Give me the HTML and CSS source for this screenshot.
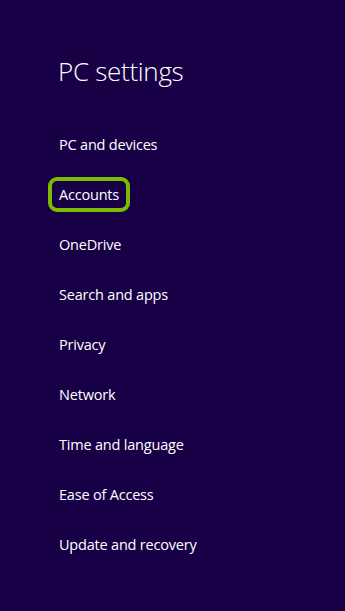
FILE: index.html
```html
<!DOCTYPE html>
<html>
  <head>
    <meta charset="utf-8">
    <meta name="viewport" content="width=device-width, initial-scale=1.0">
    <title>PC settings</title>
    <link rel="stylesheet" href="styles.css">
  </head>
  <body>
    <section class="settings">
      <h1 class="title">PC settings</h1>
      <ul class="menu">
        <li><a href="#">PC and devices</a></li>
        <li><a href="#" class="selected">Accounts</a></li>
        <li><a href="#">OneDrive</a></li>
        <li><a href="#">Search and apps</a></li>
        <li><a href="#">Privacy</a></li>
        <li><a href="#">Network</a></li>
        <li><a href="#">Time and language</a></li>
        <li><a href="#">Ease of Access</a></li>
        <li><a href="#">Update and recovery</a></li>
      </ul>
    </section>
  </body>
</html>
```

FILE: styles.css
```css
* {
  box-sizing: border-box;
}

html, body {
  height: 100%;
}

body {
  margin: 0;
  padding: 0;
  background-color: #180046;
  color: #fff;
  font-family: 'Open Sans', 'Noto Sans', sans-serif;
}

.settings {
  padding: 52px 0 0 48px;
}

.title {
  margin: 0 0 0 10px;
  font-size: 26px;
  font-weight: 300;
  line-height: 38px;
  letter-spacing: -0.3px;
}

.menu {
  list-style: none;
  margin: 29px 0 0;
  padding: 0;
}

.menu li {
  height: 50px;
  display: flex;
  align-items: center;
}

.menu a {
  display: inline-block;
  padding: 4px 7px;
  border: 4px solid transparent;
  border-radius: 9px;
  color: #fff;
  text-decoration: none;
  font-size: 14.5px;
  line-height: 19px;
  letter-spacing: -0.2px;
}

.menu a.selected {
  border-color: #7cbb00;
}
```
